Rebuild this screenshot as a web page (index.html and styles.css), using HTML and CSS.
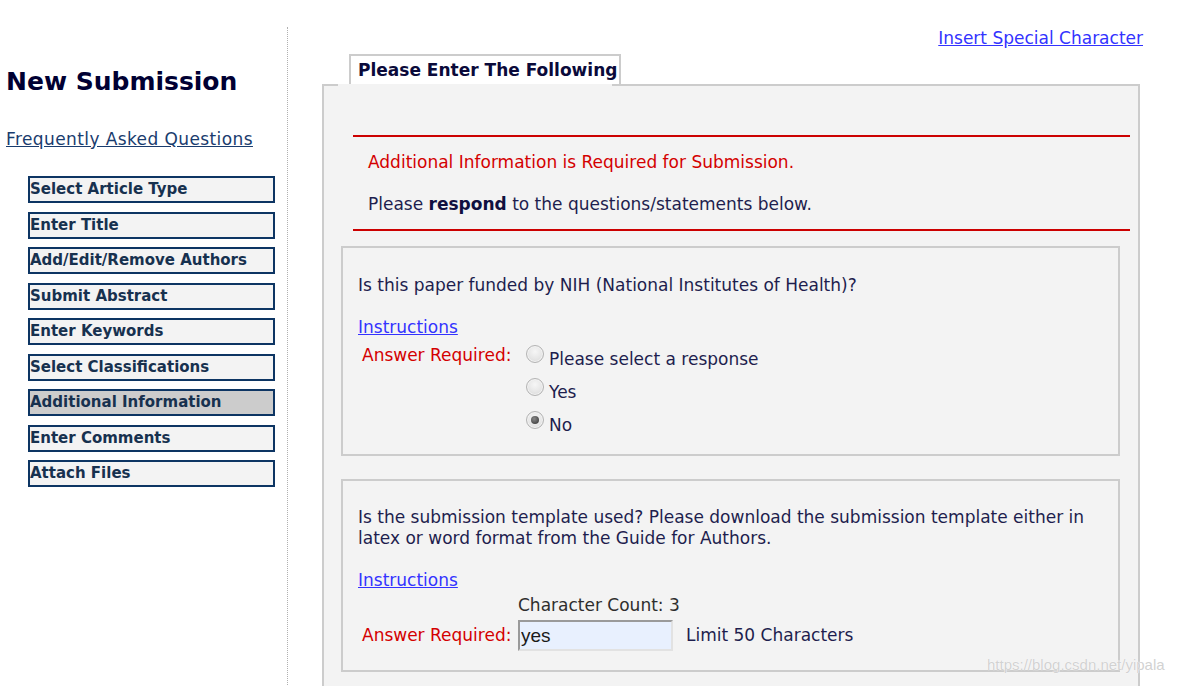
FILE: index.html
```html
<!DOCTYPE html>
<html>
<head>
<meta charset="utf-8">
<title>New Submission</title>
<link rel="stylesheet" href="styles.css">
</head>
<body>
<div class="page">
  <aside class="sidebar">
    <h1 class="title">New Submission</h1>
    <a class="faq" href="#">Frequently Asked Questions</a>
    <ul class="steps">
      <li class="step">Select Article Type</li>
      <li class="step">Enter Title</li>
      <li class="step">Add/Edit/Remove Authors</li>
      <li class="step">Submit Abstract</li>
      <li class="step">Enter Keywords</li>
      <li class="step">Select Classifications</li>
      <li class="step active">Additional Information</li>
      <li class="step">Enter Comments</li>
      <li class="step">Attach Files</li>
    </ul>
  </aside>
  <main class="main">
    <div class="toplinks"><a class="special" href="#">Insert Special Character</a></div>
    <div class="tab">Please Enter The Following</div>
    <section class="panel">
      <div class="tabgap"></div>
      <div class="message">
        <p class="msg-red">Additional Information is Required for Submission.</p>
        <p class="msg">Please <b>respond</b> to the questions/statements below.</p>
      </div>

      <div class="qbox q1">
        <p class="qtext">Is this paper funded by NIH (National Institutes of Health)?</p>
        <a class="instr" href="#">Instructions</a>
        <div class="answer">
          <div class="alabel">Answer Required:</div>
          <div class="options">
            <div class="opt"><span class="radio"></span><span class="optlabel">Please select a response</span></div>
            <div class="opt"><span class="radio"></span><span class="optlabel">Yes</span></div>
            <div class="opt"><span class="radio checked"></span><span class="optlabel">No</span></div>
          </div>
        </div>
      </div>

      <div class="qbox q2">
        <p class="qtext">Is the submission template used? Please download the submission template either in latex or word format from the Guide for Authors.</p>
        <a class="instr" href="#">Instructions</a>
        <div class="answer2">
          <div></div>
          <div class="count">Character Count: 3</div>
          <div class="alabel">Answer Required:</div>
          <div class="inputrow"><input class="field" type="text" value="yes"><span class="limit">Limit 50 Characters</span></div>
        </div>
      </div>
    </section>
  </main>
</div>
<div class="watermark">https://blog.csdn.net/yipala</div>
</body>
</html>
```

FILE: styles.css
```css
html, body {
  margin: 0;
  padding: 0;
  background: #ffffff;
}
body {
  font-family: "DejaVu Sans", Verdana, sans-serif;
  color: #1e1e4e;
  height: 686px;
  overflow: hidden;
}
p { margin: 0; }
.page {
  display: flex;
  align-items: flex-start;
}
.sidebar {
  width: 287px;
  flex: none;
  margin-top: 27px;
  border-right: 1px dotted #b0b0b0;
  min-height: 700px;
  display: flex;
  flex-direction: column;
  align-items: flex-start;
}
.title {
  margin: 40px 0 0 6px;
  font-size: 25px;
  line-height: 30px;
  font-weight: bold;
  color: #000033;
}
.faq {
  margin: 31.5px 0 0 6px;
  font-size: 17px;
  line-height: 21px;
  letter-spacing: 0.4px;
  color: #1a3c6e;
}
.steps {
  list-style: none;
  margin: 26.5px 0 0 28px;
  padding: 0;
}
.step {
  box-sizing: border-box;
  width: 247px;
  height: 27px;
  border: 2px solid #0d3563;
  background: #f3f3f3;
  margin-bottom: 8.5px;
  font-size: 15px;
  font-weight: bold;
  line-height: 23px;
  color: #17314f;
  padding-left: 0;
  white-space: nowrap;
}
.step.active { background: #cccccc; }

.main {
  flex: 1;
  display: flex;
  flex-direction: column;
}
.toplinks {
  display: flex;
  justify-content: flex-end;
  padding: 27.5px 59px 0 0;
}
.special {
  font-size: 17px;
  line-height: 21px;
  color: #3333ff;
}
.tab {
  align-self: flex-start;
  box-sizing: border-box;
  margin: 5.5px 0 0 61px;
  width: 272px;
  height: 30px;
  border: 2px solid #cccccc;
  border-bottom: none;
  background: #ffffff;
  padding-left: 7px;
  font-size: 17px;
  font-weight: bold;
  line-height: 28px;
  color: #0a0a3a;
  white-space: nowrap;
}
.panel {
  box-sizing: border-box;
  margin-left: 34px;
  width: 818px;
  border: 2px solid #cccccc;
  border-bottom: none;
  background: #f3f3f3;
  padding-bottom: 40px;
}
.tabgap {
  margin: -2px 0 0 14px;
  width: 274px;
  height: 2px;
  background: #f3f3f3;
}
.message {
  margin: 49px 8px 0 29px;
  border-top: 2px solid #cc0000;
  border-bottom: 2px solid #cc0000;
  padding: 14.5px 0 14.5px 15px;
  font-size: 17px;
  line-height: 21px;
}
.msg-red { color: #d40000; }
.msg { margin-top: 21px; color: #1e1e4e; }
.msg b { color: #101040; }

.qbox {
  margin: 0 18px 0 17px;
  border: 2px solid #cccccc;
  padding-left: 15px;
  padding-right: 15px;
  font-size: 17px;
  line-height: 21px;
}
.q1 {
  margin-top: 15px;
  padding-top: 26.5px;
  padding-bottom: 10px;
}
.q2 {
  margin-top: 23px;
  padding-top: 26px;
  padding-bottom: 19px;
}
.qtext { color: #1e1e4e; }
.instr {
  display: inline-block;
  margin-top: 21px;
  color: #3333ff;
}
.answer {
  display: flex;
  margin: 7px 0 0 4px;
}
.alabel {
  width: 156px;
  flex: none;
  color: #d40000;
  white-space: nowrap;
}
.options {
  display: flex;
  flex-direction: column;
}
.opt {
  display: flex;
  align-items: flex-start;
  height: 33px;
}
.radio {
  box-sizing: border-box;
  width: 18px;
  height: 18px;
  margin: 0 5px 0 8px;
  border-radius: 50%;
  border: 1px solid #b4b4b4;
  background: radial-gradient(circle at 50% 35%, #f6f6f6 0%, #e6e6e6 55%, #d4d4d4 100%);
  box-shadow: inset 0 0 0 1px #f2f2f2;
  display: flex;
  align-items: center;
  justify-content: center;
}
.radio.checked::after {
  content: "";
  width: 8px;
  height: 8px;
  border-radius: 50%;
  background: radial-gradient(circle at 40% 35%, #888 0%, #4a4a4a 70%);
}
.optlabel {
  padding-top: 4px;
  color: #1e1e4e;
}
.answer2 {
  display: grid;
  grid-template-columns: 156px auto;
  row-gap: 4.5px;
  margin: 4px 0 0 4px;
  align-items: center;
}
.count { color: #2e2e2e; }
.inputrow {
  display: flex;
  align-items: center;
}
.field {
  box-sizing: border-box;
  width: 155px;
  height: 31px;
  margin: 0;
  padding: 0 0 0 1px;
  border-style: solid;
  border-width: 2px;
  border-color: #9a9a9a #e2e2e2 #e2e2e2 #9a9a9a;
  background: #e8f0fe;
  font-family: "Liberation Sans", Arial, sans-serif;
  font-size: 19px;
  color: #1a1a1a;
  outline: none;
}
.limit {
  margin-left: 13px;
  color: #1e1e4e;
}
.watermark {
  position: absolute;
  left: 987px;
  top: 655px;
  font-family: "Liberation Sans", Arial, sans-serif;
  font-size: 15px;
  line-height: 20px;
  color: #d2d2d2;
  text-shadow: 0 0 1px #ffffff, 0 0 1px #ffffff;
  white-space: nowrap;
}
```
